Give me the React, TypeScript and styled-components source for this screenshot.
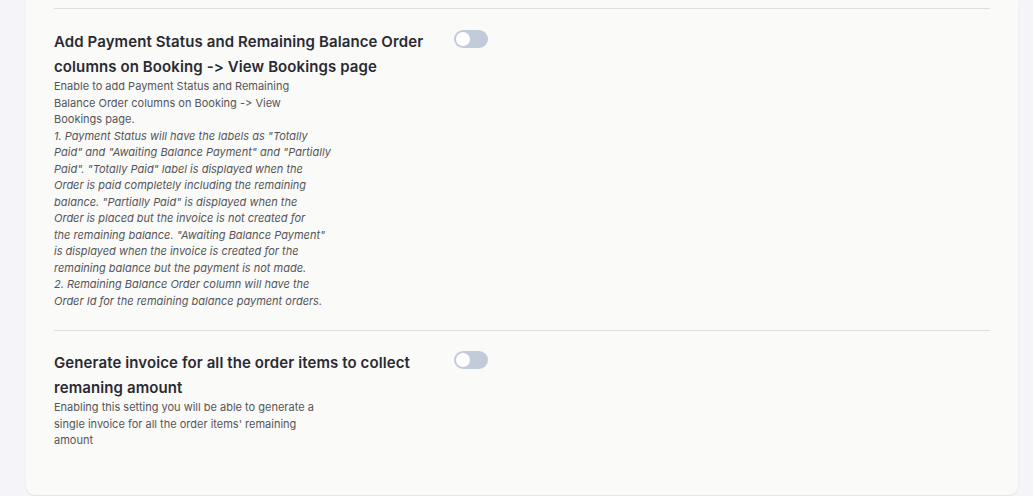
import React from 'react';
import styled, { createGlobalStyle } from 'styled-components';

const GlobalStyle = createGlobalStyle`
  html, body {
    margin: 0;
    padding: 0;
    background: #f4f4f9;
    font-family: Inter, "Noto Sans", sans-serif;
    font-feature-settings: "liga" 0, "calt" 0;
  }
`;

const Page = styled.div`
  padding: 0 15px 2px 26px;
  min-height: 496px;
  box-sizing: border-box;
`;

const Card = styled.div`
  background: #fafaf9;
  border-radius: 0 0 9px 9px;
  box-shadow: 0 1px 2px rgba(0, 0, 0, 0.08);
  padding: 8px 28px 46px;
`;

const Section = styled.section`
  display: flex;
  border-top: 1px solid #dddde2;
  padding: 20px 0 21px;

  & + & {
    padding-top: 19px;
  }

  &:last-child {
    padding-bottom: 0;
  }
`;

const Label = styled.div`
  width: 400px;
  flex-shrink: 0;
`;

const Title = styled.h3`
  margin: 0;
  font-size: 15px;
  font-weight: 600;
  line-height: 25px;
  letter-spacing: 0.1px;
  color: #2a2a33;
  max-width: 385px;
`;

const Description = styled.div`
  margin-top: -1px;
  max-width: 274px;
  font-size: 11px;
  line-height: 16.5px;
  color: #555558;
`;

const NoteLine = styled.span`
  display: block;
  font-style: italic;
  white-space: nowrap;
`;

const Toggle = styled.button<{ $on?: boolean }>`
  position: relative;
  width: 34px;
  height: 18px;
  margin-top: 1px;
  padding: 0;
  border: none;
  border-radius: 9px;
  background: ${(p) => (p.$on ? '#4f6bed' : '#c1cbd9')};
  cursor: pointer;

  &::after {
    content: '';
    position: absolute;
    top: 2px;
    left: ${(p) => (p.$on ? '18px' : '2px')};
    width: 14px;
    height: 14px;
    border-radius: 50%;
    background: #fff;
  }
`;

// lines kept as they wrap in the settings panel
const paymentNotes = [
  '1. Payment Status will have the labels as "Totally',
  'Paid" and "Awaiting Balance Payment" and "Partially',
  'Paid". "Totally Paid" label is displayed when the',
  'Order is paid completely including the remaining',
  'balance. "Partially Paid" is displayed when the',
  'Order is placed but the invoice is not created for',
  'the remaining balance. "Awaiting Balance Payment"',
  'is displayed when the invoice is created for the',
  'remaining balance but the payment is not made.',
  '2. Remaining Balance Order column will have the',
  'Order Id for the remaining balance payment orders.',
];

const App: React.FC = () => (
  <>
    <GlobalStyle />
    <Page>
      <Card>
        <Section>
          <Label>
            <Title>Add Payment Status and Remaining Balance Order columns on Booking -&gt; View Bookings page</Title>
            <Description>
              Enable to add Payment Status and Remaining Balance Order columns on Booking -&gt; View Bookings page.
              {paymentNotes.map((line) => (
                <NoteLine key={line}>{line}</NoteLine>
              ))}
            </Description>
          </Label>
          <Toggle aria-label="toggle payment status columns" />
        </Section>
        <Section>
          <Label>
            <Title>Generate invoice for all the order items to collect remaning amount</Title>
            <Description>
              Enabling this setting you will be able to generate a single invoice for all the order items' remaining
              amount
            </Description>
          </Label>
          <Toggle aria-label="toggle single invoice" />
        </Section>
      </Card>
    </Page>
  </>
);

export default App;
